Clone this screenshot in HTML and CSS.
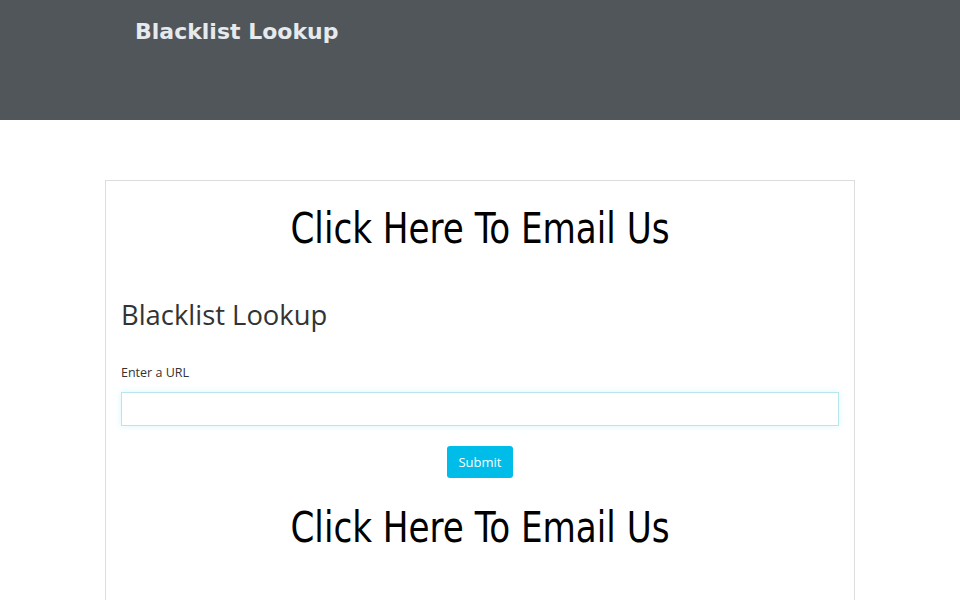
FILE: index.html
```html
<!DOCTYPE html>
<html>
<head>
<meta charset="utf-8">
<link rel="stylesheet" href="styles.css">
</head>
<body>
<header class="topbar">
  <div class="brand">Blacklist Lookup</div>
</header>
<main class="page">
  <section class="card">
    <a class="email" href="#">Click Here To Email Us</a>
    <h1 class="title">Blacklist Lookup</h1>
    <form class="lookup">
      <label class="label" for="url">Enter a URL</label>
      <input class="field" id="url" type="text">
      <div class="actions"><button class="submit" type="button">Submit</button></div>
    </form>
    <a class="email" href="#">Click Here To Email Us</a>
  </section>
</main>
</body>
</html>
```
FILE: styles.css
```css
html, body {
  margin: 0;
  padding: 0;
  background: #ffffff;
}
body {
  font-family: "Open Sans", "DejaVu Sans", sans-serif;
  color: #333;
}
.topbar {
  height: 120px;
  background: #50565a;
  box-sizing: border-box;
  padding: 19px 0 0 135px;
}
.brand {
  font-family: "DejaVu Sans", sans-serif;
  font-weight: bold;
  font-size: 22px;
  color: #e6eaed;
}
.page {
  padding-top: 60px;
  display: flex;
  justify-content: center;
}
.card {
  width: 750px;
  box-sizing: border-box;
  border: 1px solid #dddddd;
  padding: 22px 15px 40px;
  min-height: 460px;
}
.email {
  display: block;
  text-align: center;
  font-family: "DejaVu Sans Condensed", "DejaVu Sans", sans-serif;
  font-stretch: semi-condensed;
  font-size: 42px;
  line-height: 52px;
  color: #000;
  text-decoration: none;
  transform: scaleX(0.905);
}
.title {
  font-family: "Open Sans", sans-serif;
  font-weight: normal;
  font-size: 27.4px;
  margin: 42px 0 0;
  line-height: 36px;
  color: #333;
}
.lookup {
  margin-top: 32px;
}
.label {
  display: block;
  font-size: 12.5px;
  line-height: 16px;
  color: #333;
  margin-bottom: 11px;
}
.field {
  display: block;
  width: 100%;
  box-sizing: border-box;
  height: 34px;
  border: 1px solid #b9e6ee;
  box-shadow: 0 0 6px rgba(102, 220, 236, 0.25);
  outline: none;
  padding: 6px 12px;
  font-size: 14px;
}
.actions {
  display: flex;
  justify-content: center;
  margin-top: 20px;
}
.submit {
  background: #00bce8;
  color: #fff;
  border: none;
  border-radius: 3px;
  height: 32px;
  width: 66px;
  font-family: "Open Sans", sans-serif;
  font-size: 13px;
  cursor: pointer;
}
.lookup + .email {
  margin-top: 24px;
}
```
